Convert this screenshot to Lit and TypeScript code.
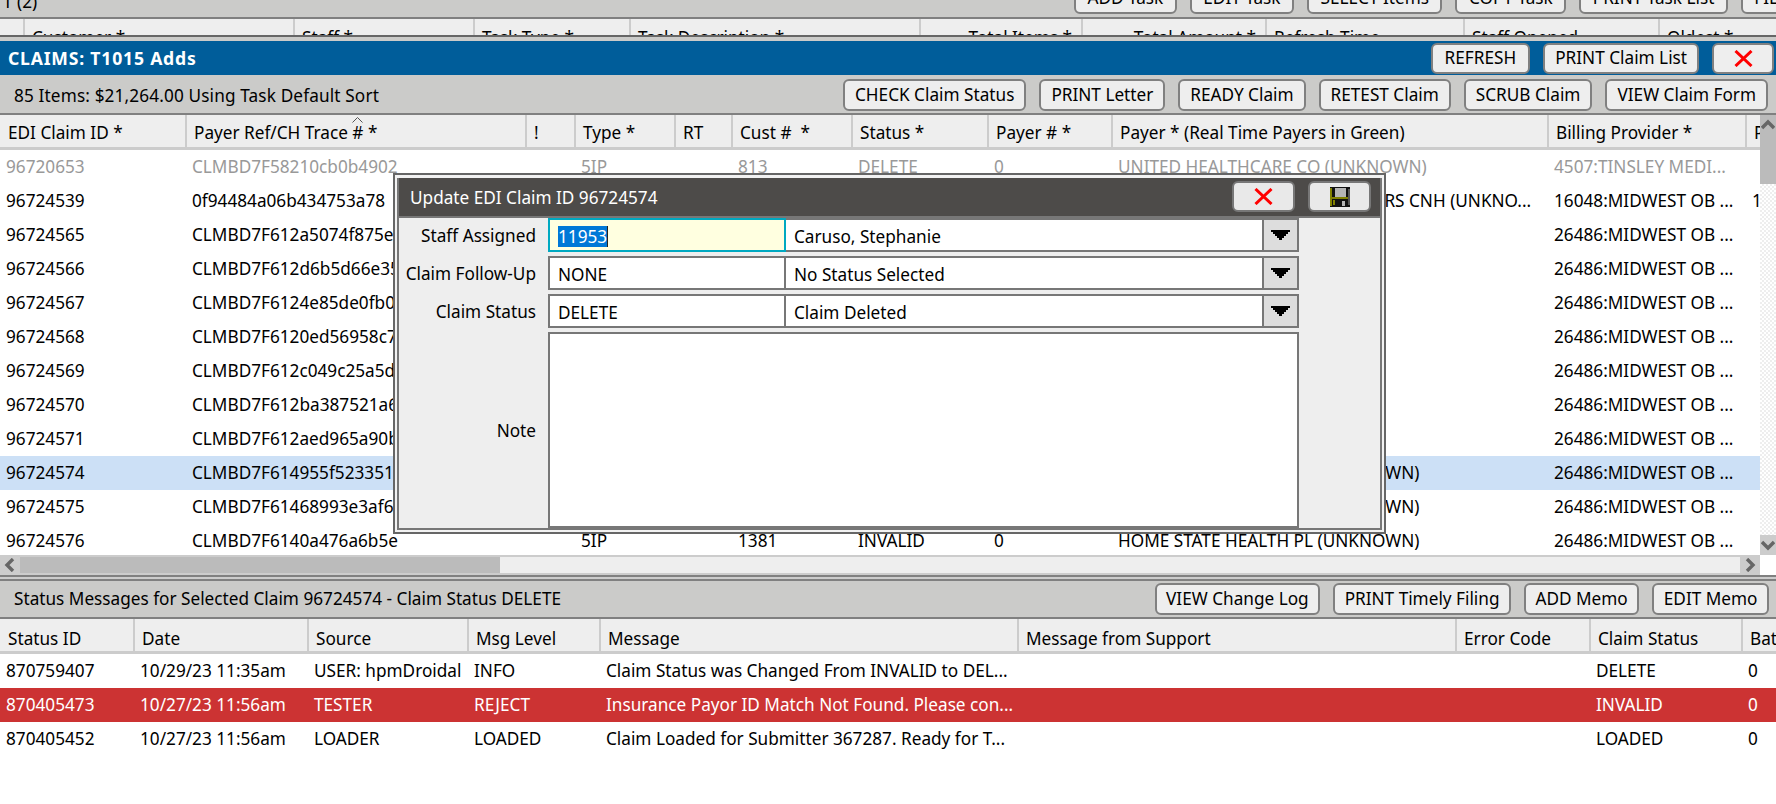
import { LitElement, html, css, svg } from "lit";
import { customElement } from "lit/decorators.js";

const xIcon = svg`<svg class="x" width="19" height="17" viewBox="0 0 19 17"><path d="M1.5 1 L17.5 16 M17.5 1 L1.5 16" stroke="#f00" stroke-width="3" fill="none"/></svg>`;
const saveIcon = svg`<svg width="20" height="20" viewBox="0 0 20 20" shape-rendering="crispEdges"><rect width="20" height="20" fill="#111"/><rect x="0" y="1" width="2" height="18" fill="#808000"/><rect x="5" y="1" width="11" height="9" fill="#b5b5b5"/><rect x="2" y="10" width="16" height="2" fill="#808000"/><rect x="3" y="13" width="2" height="5" fill="#808000"/><rect x="12" y="14" width="3" height="5" fill="#b5b5b5"/><rect x="18" y="2" width="2" height="16" fill="#555"/></svg>`;
const arrow = svg`<svg width="19" height="11" viewBox="0 0 19 11" shape-rendering="crispEdges"><path d="M0 0H19V2H17V4H15V6H13V8H11V10H8V8H6V6H4V4H2V2H0Z" fill="#000"/></svg>`;
const chev = (d: string) => svg`<svg width="14" height="14" viewBox="0 0 14 14"><path d="${d}" stroke="#666" stroke-width="3.4" fill="none"/></svg>`;

const topCols = "23px 270px 180px 156px 290px 162px 184px 198px 195px 118px";
const mainCols = "185px 340px 49px 100px 57px 120px 136px 124px 436px 198px 15px";
const botCols = "133px 174px 160px 132px 418px 438px 134px 152px 35px";

const topHead: [string, boolean?][] = [[""], ["Customer *"], ["Staff *"], ["Task Type *"], ["Task Description *"], ["Total Items *", true], ["Total Amount *", true], ["Refresh Time"], ["Staff Opened"], ["Oldest *"]];
const mainHead = ["EDI Claim ID *", "Payer Ref/CH Trace # *", "!", "Type *", "RT", "Cust #  *", "Status *", "Payer # *", "Payer * (Real Time Payers in Green)", "Billing Provider *", "Pat"];
const botHead = ["Status ID", "Date", "Source", "Msg Level", "Message", "Message from Support", "Error Code", "Claim Status", "Batch"];

const mw = "26486:MIDWEST OB ...";
const hs = "HOME STATE HEALTH PL (UNKNOWN)";
const row = (id: string, ref: string, cust: string, status: string, payer: string, prov = mw, last = "") =>
  [id, ref, "", "5IP", "", cust, status, "0", payer, prov, last];
const mainRows = [
  row("96720653", "CLMBD7F58210cb0b4902", "813", "DELETE", "UNITED HEALTHCARE CO (UNKNOWN)", "4507:TINSLEY MEDI..."),
  row("96724539", "0f94484a06b434753a78", "1381", "INVALID", "UNITED HEALTHCARE A PROVIDERS CNH (UNKNO...", "16048:MIDWEST OB ...", "1"),
  row("96724565", "CLMBD7F612a5074f875e", "1381", "INVALID", ""),
  row("96724566", "CLMBD7F612d6b5d66e35", "1381", "INVALID", ""),
  row("96724567", "CLMBD7F6124e85de0fb0", "1381", "INVALID", ""),
  row("96724568", "CLMBD7F6120ed56958c7", "1381", "INVALID", ""),
  row("96724569", "CLMBD7F612c049c25a5d", "1381", "INVALID", ""),
  row("96724570", "CLMBD7F612ba387521a6", "1381", "INVALID", ""),
  row("96724571", "CLMBD7F612aed965a90b", "1381", "INVALID", ""),
  row("96724574", "CLMBD7F614955f523351", "1381", "INVALID", hs),
  row("96724575", "CLMBD7F61468993e3af6", "1381", "INVALID", hs),
  row("96724576", "CLMBD7F6140a476a6b5e", "1381", "INVALID", hs),
];
const botRows = [
  ["870759407", "10/29/23 11:35am", "USER: hpmDroidal", "INFO", "Claim Status was Changed From INVALID to DEL...", "", "", "DELETE", "0"],
  ["870405473", "10/27/23 11:56am", "TESTER", "REJECT", "Insurance Payor ID Match Not Found. Please con...", "", "", "INVALID", "0"],
  ["870405452", "10/27/23 11:56am", "LOADER", "LOADED", "Claim Loaded for Submitter 367287. Ready for T...", "", "", "LOADED", "0"],
];

@customElement("app-root")
export class AppRoot extends LitElement {
  static styles = css`
    :host { display: block; position: relative; width: 1776px; height: 804px; overflow: hidden; background: #fff; color: #000;
      font-family: "Noto Sans", "Liberation Sans", sans-serif; font-size: 17.2px; line-height: 22px; }
    * { box-sizing: border-box; }
    .bar { display: flex; align-items: center; justify-content: space-between; background: #cbcbc9; white-space: nowrap; }
    .btns { display: flex; gap: 13px; }
    .btn { display: flex; align-items: center; justify-content: center; height: 32px; padding: 0 10px 1px; background: #eee; border: 2px solid #808080; border-radius: 6px; white-space: nowrap; }
    .top-bar { height: 19px; border-bottom: 2px solid #808080; align-items: flex-end; overflow: hidden; padding-bottom: 3px; flex-wrap: nowrap; }
    .top-label { margin: 0 0 2px 3px; line-height: 20px; }
    .top-btns { flex: none; margin-left: auto; width: 702px; }
    .top-btns .btn { padding: 0 11.5px 1px; }
    .top-head { height: 18px; overflow: hidden; background: #eee; border-bottom: 2px solid #666; }
    .blue-gap { height: 4px; background: #cbcbc9; }
    .blue { height: 34px; background: #005d9a; color: #fff; padding-left: 8px; }
    .blue-title { font-weight: 700; font-size: 17.6px; letter-spacing: 0.8px; }
    .blue .btns { color: #000; font-weight: 400; height: 31px; gap: 13px; margin-top: 1px; margin-right: 2px; }
    .blue .btn { height: 31px; }
    .blue .btn.refresh { padding: 0 12px 1px; }
    .btn.close { width: 62px; padding: 0; }
    .sub { height: 38px; padding: 2px 8px 0 14px; }
    .sub-label { padding-top: 2px; letter-spacing: 0.14px; }
    .sep { height: 2px; background: #808080; }
    .main { display: flex; height: 460px; }
    .list { width: 1760px; display: flex; flex-direction: column; }
    .head, .cells { display: grid; white-space: nowrap; }
    .head { height: 35px; background: #eee; border-bottom: 3px solid #ccc; flex: none; }
    .hc { display: flex; align-items: center; padding: 4px 0 0 7px; overflow: hidden; border-left: 2px solid #ccc; position: relative; white-space: pre; }
    .hc:first-child { border-left: 0; padding-left: 8px; }
    .hc.end { justify-content: flex-end; padding: 4px 9px 0 0; }
    .bot-head .hc { padding-top: 7px; }
    .caret-up { position: absolute; left: 165px; top: 2px; }
    .top-head .head { height: 34px; border: 0; }
    .rows { height: 405px; overflow: hidden; flex: none; }
    .cells { height: 34px; align-items: center; }
    .c { padding-left: 7px; overflow: hidden; white-space: pre; }
    .c:first-child { padding-left: 6px; }
    .muted { color: #999; }
    .sel { background: #cce0f6; }
    .red { background: #c33; color: #fff; }
    .hscroll { height: 20px; display: flex; background: #eee; border-top: 2px solid #ccc; border-bottom: 2px solid #ccc; }
    .arr { width: 20px; display: flex; align-items: center; justify-content: center; background: #ccc; flex: none; }
    .hthumb { width: 480px; background: #bbb; }
    .htrack { flex: 1; }
    .vscroll { width: 16px; display: flex; flex-direction: column; }
    .vthumb { height: 69px; background: #bbb; display: flex; justify-content: center; padding-top: 3px; }
    .vtrack { height: 351px; background: repeating-conic-gradient(#eee 0 25%, #fff 0 50%) 0 0 / 4px 4px; }
    .vdown { height: 20px; background: #ccc; display: flex; justify-content: center; align-items: center; }
    .double { height: 6px; background: #ccc; border-top: 2px solid #808080; border-bottom: 2px solid #808080; }
    .status { height: 36px; padding: 0 7px 0 14px; }
    .status .btn { height: 32px; padding: 0 9.5px 1px; }
    .modal { position: absolute; left: 393px; top: 173px; width: 993px; height: 361px; border: 2px solid #666; background: #f2f2f2; padding: 3px 2px 2px; }
    .inner { height: 100%; border: 2px solid #777; border-top: 0; display: flex; flex-direction: column; background: #eee; }
    .m-head { height: 40px; flex: none; background: #4d4b49; border-bottom: 2px solid #777; color: #fff; display: flex; align-items: center; justify-content: space-between; padding: 0 9px 0 11px; }
    .m-title { padding-top: 1px; }
    .m-btns { display: flex; gap: 13px; margin-bottom: 1px; }
    .m-btns .btn { width: 63px; height: 31px; padding: 0; background: #e9e9e9; border-color: #777; }
    .m-body { display: grid; grid-template-columns: 149px 238px 476px 37px; grid-template-rows: 34px 34px 34px 196px; row-gap: 4px; align-items: stretch; }
    .lab { display: flex; align-items: center; justify-content: flex-end; padding: 2px 12px 0 0; }
    .f { background: #fff; border: 2px solid #777; display: flex; align-items: center; padding: 3px 0 0 8px; white-space: nowrap; }
    .f + .f { border-left: 0; border-right: 0; }
    .f.focus { background: #ffffe0; border-color: #00a9c1; }
    .selected { background: #0078d7; color: #fff; display: inline-block; line-height: 21px; border-right: 1.5px solid #222; }
    .drop { background: #ddd; border: 2px solid #777; display: flex; align-items: center; justify-content: center; }
    .area { grid-column: 2 / 5; background: #fff; border: 2px solid #777; }
  `;

  render() {
    return html`
      <div class="bar top-bar">
        <div class="top-label">T (2)</div>
        <div class="btns top-btns">
          ${["ADD Task", "EDIT Task", "SELECT Items", "COPY Task", "PRINT Task List", "FILTER Task"].map((b) => html`<div class="btn">${b}</div>`)}
        </div>
      </div>
      <div class="top-head">
        <div class="head" style="grid-template-columns:${topCols}">
          ${topHead.map(([t, e]) => html`<div class="hc ${e ? "end" : ""}">${t}</div>`)}
        </div>
      </div>
      <div class="blue-gap"></div>
      <div class="bar blue">
        <div class="blue-title">CLAIMS: T1015 Adds</div>
        <div class="btns">
          <div class="btn refresh">REFRESH</div>
          <div class="btn">PRINT Claim List</div>
          <div class="btn close">${xIcon}</div>
        </div>
      </div>
      <div class="bar sub">
        <div class="sub-label">85 Items: $21,264.00 Using Task Default Sort</div>
        <div class="btns">
          ${["CHECK Claim Status", "PRINT Letter", "READY Claim", "RETEST Claim", "SCRUB Claim", "VIEW Claim Form"].map((b) => html`<div class="btn">${b}</div>`)}
        </div>
      </div>
      <div class="sep"></div>
      <div class="main">
        <div class="list">
          <div class="head" style="grid-template-columns:${mainCols}">
            ${mainHead.map((t, i) => html`<div class="hc">${t}${i === 1 ? svg`<svg class="caret-up" width="11" height="6" viewBox="0 0 11 6"><path d="M0.5 5.5 L5.5 0.5 L10.5 5.5" stroke="#555" fill="none"/></svg>` : ""}</div>`)}
          </div>
          <div class="rows">
            ${mainRows.map((r, i) => html`<div class="cells ${i === 0 ? "muted" : ""} ${i === 9 ? "sel" : ""}" style="grid-template-columns:${mainCols}">${r.map((c) => html`<div class="c">${c}</div>`)}</div>`)}
          </div>
          <div class="hscroll">
            <div class="arr">${chev("M10 1 L4 7 L10 13")}</div>
            <div class="hthumb"></div>
            <div class="htrack"></div>
            <div class="arr">${chev("M4 1 L10 7 L4 13")}</div>
          </div>
        </div>
        <div class="vscroll">
          <div class="vthumb">${chev("M1 10 L7 4 L13 10")}</div>
          <div class="vtrack"></div>
          <div class="vdown">${chev("M1 4 L7 10 L13 4")}</div>
        </div>
      </div>
      <div class="double"></div>
      <div class="bar status">
        <div>Status Messages for Selected Claim 96724574 - Claim Status DELETE</div>
        <div class="btns">
          ${["VIEW Change Log", "PRINT Timely Filing", "ADD Memo", "EDIT Memo"].map((b) => html`<div class="btn">${b}</div>`)}
        </div>
      </div>
      <div class="sep"></div>
      <div class="head bot-head" style="grid-template-columns:${botCols}">${botHead.map((t) => html`<div class="hc">${t}</div>`)}</div>
      ${botRows.map((r, i) => html`<div class="cells ${i === 1 ? "red" : ""}" style="grid-template-columns:${botCols}">${r.map((c) => html`<div class="c">${c}</div>`)}</div>`)}

      <div class="modal">
        <div class="inner">
          <div class="m-head">
            <div class="m-title">Update EDI Claim ID 96724574</div>
            <div class="m-btns">
              <div class="btn">${xIcon}</div>
              <div class="btn">${saveIcon}</div>
            </div>
          </div>
          <div class="m-body">
            <div class="lab">Staff Assigned</div>
            <div class="f focus"><span class="selected">11953</span></div>
            <div class="f">Caruso, Stephanie</div>
            <div class="drop">${arrow}</div>
            <div class="lab">Claim Follow-Up</div>
            <div class="f">NONE</div>
            <div class="f">No Status Selected</div>
            <div class="drop">${arrow}</div>
            <div class="lab">Claim Status</div>
            <div class="f">DELETE</div>
            <div class="f">Claim Deleted</div>
            <div class="drop">${arrow}</div>
            <div class="lab">Note</div>
            <div class="area"></div>
          </div>
        </div>
      </div>
    `;
  }
}
